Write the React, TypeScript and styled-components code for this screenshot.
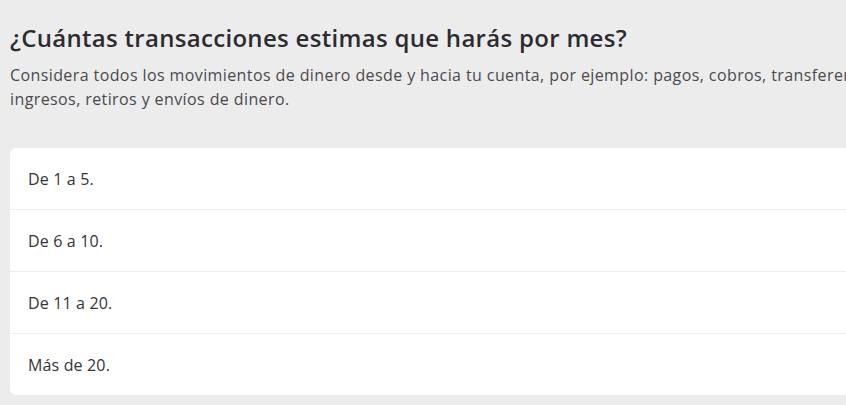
import React from "react";
import styled, { createGlobalStyle } from "styled-components";

const GlobalStyle = createGlobalStyle`
  html, body {
    margin: 0;
    padding: 0;
    background: #ececec;
    overflow: hidden;
  }
  body {
    font-family: "Open Sans", "Lato", sans-serif;
  }
`;

const Page = styled.main`
  width: 1100px;
  padding: 22px 0 0 10px;
  box-sizing: border-box;
`;

const Title = styled.h1`
  margin: 0;
  font-size: 24px;
  line-height: 32px;
  font-weight: 600;
  letter-spacing: 0.3px;
  color: #2c2c30;
`;

const Description = styled.p`
  margin: 9px 0 0;
  font-size: 16px;
  line-height: 24px;
  letter-spacing: 0.4px;
  color: #4a4a4e;
`;

const Line = styled.span`
  display: block;
  white-space: nowrap;
`;

const OptionList = styled.ul`
  list-style: none;
  margin: 37px 0 0;
  padding: 0;
  background: #ffffff;
  border-radius: 6px;
  overflow: hidden;
`;

const Option = styled.li<{ $last?: boolean }>`
  display: flex;
  align-items: center;
  height: 61px;
  padding: 0 18px;
  font-size: 16px;
  letter-spacing: 0.15px;
  color: #333338;
  border-bottom: ${(p) => (p.$last ? "none" : "1px solid #eeeeee")};
`;

const options = ["De 1 a 5.", "De 6 a 10.", "De 11 a 20.", "Más de 20."];

export default function App() {
  return (
    <>
      <GlobalStyle />
      <Page>
        <Title>¿Cuántas transacciones estimas que harás por mes?</Title>
        <Description>
          <Line>
            Considera todos los movimientos de dinero desde y hacia tu cuenta, por ejemplo: pagos, cobros, transferencias,
          </Line>
          <Line>ingresos, retiros y envíos de dinero.</Line>
        </Description>
        <OptionList>
          {options.map((o, i) => (
            <Option key={o} $last={i === options.length - 1}>
              {o}
            </Option>
          ))}
        </OptionList>
      </Page>
    </>
  );
}
